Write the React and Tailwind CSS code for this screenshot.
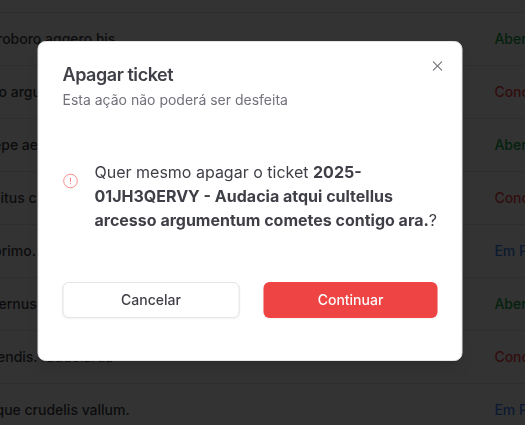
import React from "react";
import { RxCross2 } from "react-icons/rx";

const rows = [
  { subject: "roboro aggero his.", shift: "-ml-[3px]", status: "Aberto", color: "text-[#16a34a]" },
  { subject: "o argumentum", shift: "-ml-[1.5px]", status: "Concluído", color: "text-[#ef4444]" },
  { subject: "epe aeger", shift: "-ml-[7px]", status: "Aberto", color: "text-[#16a34a]" },
  { subject: "itus c", shift: "ml-[0.5px]", status: "Concluído", color: "text-[#ef4444]" },
  { subject: "primo.", shift: "-ml-[7px]", status: "Em Progresso", color: "text-[#3b82f6]" },
  { subject: "ernus", shift: "-ml-[1.5px]", status: "Aberto", color: "text-[#16a34a]" },
  { subject: "endis. raudelarua", shift: "-ml-[3px]", status: "Concluído", color: "text-[#ef4444]" },
  { subject: "que crudelis vallum.", shift: "-ml-[4.5px]", status: "Em Progresso", color: "text-[#3b82f6]" },
];

function TicketTable() {
  return (
    <div className="h-[425px] overflow-hidden bg-white pt-3 text-sm font-medium text-zinc-700">
      {rows.map((row, i) => (
        <div key={i} className="flex h-[53px] items-center border-t border-zinc-200 whitespace-nowrap">
          <div className="w-[494.4px] shrink-0">
            <div className={row.shift}>{row.subject}</div>
          </div>
          <div className={row.color}>{row.status}</div>
        </div>
      ))}
    </div>
  );
}

function AlertIcon() {
  return (
    <svg className="mt-[13px] size-4 shrink-0 text-[#ef4444]" viewBox="0 0 16 16" fill="none" stroke="currentColor" strokeWidth="0.6">
      <circle cx="8" cy="8" r="6.8" />
      <path d="M8 4.7V8.8M8 10.2V11.2" strokeWidth="0.7" />
    </svg>
  );
}

export default function App() {
  return (
    <div className="relative h-[425px] w-[525px] overflow-hidden font-['Inter',sans-serif]">
      <TicketTable />
      <div className="absolute inset-0 flex items-start bg-black/80 pt-[41px] pl-[250px]">
        <div
          role="dialog"
          className="relative flex h-[320px] w-[425px] shrink-0 -translate-x-1/2 flex-col rounded-lg border border-zinc-200 bg-white p-6 text-zinc-700 shadow-lg will-change-transform"
        >
          <button aria-label="Fechar" className="absolute top-4 right-4 opacity-70">
            <RxCross2 className="size-4" />
          </button>
          <h2 className="text-lg leading-none font-semibold tracking-tight">Apagar ticket</h2>
          <p className="mt-1.5 text-sm text-zinc-500">Esta ação não poderá ser desfeita</p>
          <div className="mt-[50px] flex gap-4">
            <AlertIcon />
            <p className="text-base">
              Quer mesmo apagar o ticket{" "}
              <strong className="font-bold">
                2025-01JH3QERVY - Audacia atqui cultellus arcesso argumentum cometes contigo ara.
              </strong>
              ?
            </p>
          </div>
          <div className="mt-[50px] flex gap-6">
            <button className="h-9 w-[177px] rounded-md border border-zinc-200 bg-white text-sm font-medium shadow-xs">
              Cancelar
            </button>
            <button className="h-9 flex-1 rounded-md bg-[#ef4444] text-sm font-medium text-zinc-50 shadow-xs">
              Continuar
            </button>
          </div>
        </div>
      </div>
    </div>
  );
}
